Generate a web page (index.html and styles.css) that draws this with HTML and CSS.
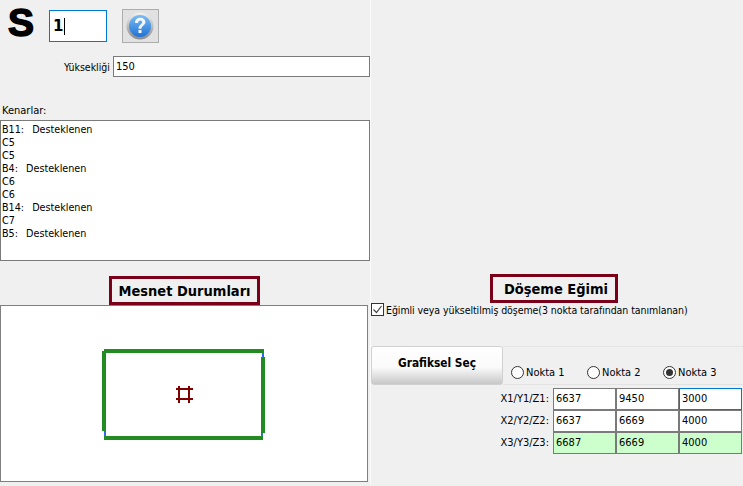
FILE: index.html
```html
<!DOCTYPE html>
<html lang="tr">
<head>
<meta charset="utf-8">
<title>Döşeme</title>
<link rel="stylesheet" href="styles.css">
</head>
<body>
<main class="page">
  <section class="left">
    <div class="id-row">
      <span class="big-s">S</span>
      <div class="id-input"><span>1</span><i class="caret"></i></div>
      <button class="help" type="button" aria-label="Yardım">
        <svg width="30" height="30" viewBox="0 0 30 30">
          <defs>
            <linearGradient id="blue" x1="0" y1="0" x2="0" y2="1">
              <stop offset="0" stop-color="#7cbcf4"/>
              <stop offset="1" stop-color="#1f73d6"/>
            </linearGradient>
            <linearGradient id="ring" x1="0" y1="0" x2="0" y2="1">
              <stop offset="0" stop-color="#f2f2f2"/>
              <stop offset="1" stop-color="#8a8a8a"/>
            </linearGradient>
          </defs>
          <circle cx="14" cy="15" r="13.500" fill="url(#ring)"/>
          <circle cx="14" cy="15" r="11" fill="url(#blue)"/>
          <path d="M9 12c0-3.300 2.300-5.200 5.200-5.200 3 0 5.200 1.800 5.200 4.300 0 3.500-3.900 3.600-3.900 6.700h-3c0-4.200 3.700-4.500 3.700-6.500 0-1-.8-1.800-2-1.800-1.300 0-2.100 1-2.100 2.500z" fill="#f4f8fc"/>
          <rect x="12.500" y="19" width="3" height="3" fill="#f4f8fc"/>
        </svg>
      </button>
    </div>
    <div class="height-row">
      <label class="height-label">Yüksekliği</label>
      <div class="field height-input">150</div>
    </div>
    <div class="edges-label">Kenarlar:</div>
    <div class="edges">
      <div>B11:&nbsp; Desteklenen</div>
      <div>C5</div>
      <div>C5</div>
      <div>B4:&nbsp; Desteklenen</div>
      <div>C6</div>
      <div>C6</div>
      <div>B14:&nbsp; Desteklenen</div>
      <div>C7</div>
      <div>B5:&nbsp; Desteklenen</div>
    </div>
    <div class="title-wrap left-title"><h2 class="title title-a">Mesnet Durumları</h2></div>
    <div class="canvas">
      <svg class="plan" width="366" height="175" viewBox="0 0 366 175">
        <g fill="#2a6af0">
          <rect x="261" y="47" width="2" height="5"/>
          <rect x="103" y="125" width="2" height="5"/>
          <rect x="260" y="127" width="2" height="3"/>
        </g>
        <g fill="#228b22">
          <rect x="103" y="43" width="160" height="4"/>
          <rect x="101" y="45" width="4" height="80"/>
          <rect x="103" y="130" width="159" height="4"/>
          <rect x="260" y="51" width="4" height="76"/>
        </g>
        <g fill="#800000">
          <rect x="177" y="80" width="2" height="17"/>
          <rect x="187" y="80" width="2" height="17"/>
          <rect x="175" y="82" width="17" height="2"/>
          <rect x="175" y="92" width="17" height="2"/>
        </g>
      </svg>
    </div>
  </section>
  <section class="right">
    <div class="title-wrap right-title"><h2 class="title title-b">Döşeme Eğimi</h2></div>
    <label class="check-row">
      <span class="check">
        <svg width="13" height="13" viewBox="0 0 13 13"><path d="M2.500 6.500l3 3 5-6.500" fill="none" stroke="#444" stroke-width="1.200"/></svg>
      </span>
      <span class="check-text">Eğimli veya yükseltilmiş döşeme(3 nokta tarafından tanımlanan)</span>
    </label>
    <div class="pick-row">
      <button class="pick" type="button">Grafiksel Seç</button>
      <div class="radios">
        <span class="radio-item"><i class="radio"></i>Nokta 1</span>
        <span class="radio-item"><i class="radio"></i>Nokta 2</span>
        <span class="radio-item"><i class="radio on"></i>Nokta 3</span>
      </div>
    </div>
    <div class="coords">
      <span class="coord-label">X1/Y1/Z1:</span>
      <div class="cell">6637</div><div class="cell">9450</div><div class="cell focus">3000</div>
      <span class="coord-label">X2/Y2/Z2:</span>
      <div class="cell">6637</div><div class="cell">6669</div><div class="cell">4000</div>
      <span class="coord-label">X3/Y3/Z3:</span>
      <div class="cell green">6687</div><div class="cell green">6669</div><div class="cell green">4000</div>
    </div>
  </section>
</main>
</body>
</html>
```
FILE: styles.css
```css
* { box-sizing: border-box; }
html, body { margin: 0; padding: 0; }
body {
  width: 743px;
  height: 486px;
  overflow: hidden;
  background: #f0f0f0;
  color: #000;
  font-family: "DejaVu Sans Condensed", "DejaVu Sans", sans-serif;
  font-stretch: condensed;
  font-size: 11px;
}
.page { display: grid; grid-template-columns: 370px 373px; height: 486px; }
.left { display: flex; flex-direction: column; }
.id-row { display: flex; align-items: flex-start; height: 56px; padding: 9px 0 0 8px; }
.big-s { width: 41px; font: 900 39px/27px "Liberation Sans", sans-serif; -webkit-text-stroke: 1.500px #000; }
.id-input {
  width: 58px; height: 32px; margin-top: 1px;
  border: 1px solid #0078d7; background: #fff;
  display: flex; align-items: center; padding-left: 3px;
  font: 700 15px "DejaVu Sans", sans-serif;
}
.caret { width: 1px; height: 17px; background: #000; margin-left: 1px; }
.help {
  width: 37px; height: 34px; margin-left: 15px; padding: 0;
  border: 1px solid #adadad; background: #e1e1e1;
  display: flex; align-items: center; justify-content: center;
}
.height-row { display: flex; align-items: center; height: 21px; }
.height-label { width: 110px; text-align: right; font-size: 10.500px; }
.field { border: 1px solid #7a7a7a; background: #fff; }
.height-input { width: 257px; height: 21px; margin-left: 3px; padding: 2px 0 0 2px; line-height: 15px; }
.edges-label { margin-top: 26px; height: 17px; padding-left: 2px; line-height: 15px; }
.edges {
  width: 370px; height: 141px;
  border: 1px solid #7a7a7a; background: #fff;
  padding: 2px 0 0 1px; line-height: 13px;
  font-size: 10.700px; word-spacing: 1px;
}
.title-wrap { display: flex; }
.left-title { height: 44px; padding: 15px 0 0 109px; }
.right-title { height: 41px; padding: 13px 0 0 119px; margin-top: 261px; }
.title {
  margin: 0; height: 29px; border: 3px solid #7a0019;
  font: 700 14.500px/24px "DejaVu Sans Condensed", "DejaVu Sans", sans-serif;
  font-stretch: condensed; text-align: center;
}
.title-a { width: 151px; }
.title-b { width: 128px; padding-left: 4px; }
.canvas { width: 368px; height: 177px; border: 1px solid #7f7f7f; background: #fff; }
.plan { display: block; }
.right { display: flex; flex-direction: column; border-left: 1px solid #fafafa; }
.check-row { display: flex; align-items: center; height: 15px; gap: 2px; }
.check-text { font-size: 10.500px; letter-spacing: -0.07px; }
.check {
  width: 13px; height: 13px; border: 1px solid #333; background: #fff;
  display: block; flex: none;
}
.check svg { display: block; margin: -1px; }
.pick-row { display: flex; margin-top: 29px; height: 39px; }
.pick {
  width: 132px; height: 39px; padding: 0 0 6px;
  border: 1px solid #d0d0d0; border-radius: 3px;
  background: linear-gradient(#fff 0%, #fafafa 55%, #c8c8c8 100%);
  font: 700 11.800px "DejaVu Sans Condensed", "DejaVu Sans", sans-serif;
  font-stretch: condensed;
}
.radios {
  flex: 1; border-top: 1px solid #e3e3e3; border-bottom: 1px solid #e3e3e3;
  display: flex; align-items: flex-end; padding: 0 0 4px 8px; gap: 12px;
}
.radio-item { display: flex; align-items: center; width: 64px; gap: 2px; line-height: 15px; font-size: 11px; }
.radio {
  width: 13px; height: 13px; border: 1px solid #333; border-radius: 50%;
  background: #fff; display: flex; align-items: center; justify-content: center; flex: none;
}
.radio.on::after { content: ""; width: 7px; height: 7px; border-radius: 50%; background: #333; }
.coords {
  display: grid; grid-template-columns: 182px 63px 63px 63px;
  grid-auto-rows: 22px; margin-top: 3px; width: 371px;
}
.coord-label { text-align: right; padding: 3px 4px 0 0; line-height: 15px; }
.cell {
  border: 1px solid #7a7a7a; background: #fff;
  padding: 2px 0 0 2px; line-height: 15px; font-size: 11px;
}
.cell.focus { border-color: #0078d7; }
.cell.green { background: #ccffcc; }
```
